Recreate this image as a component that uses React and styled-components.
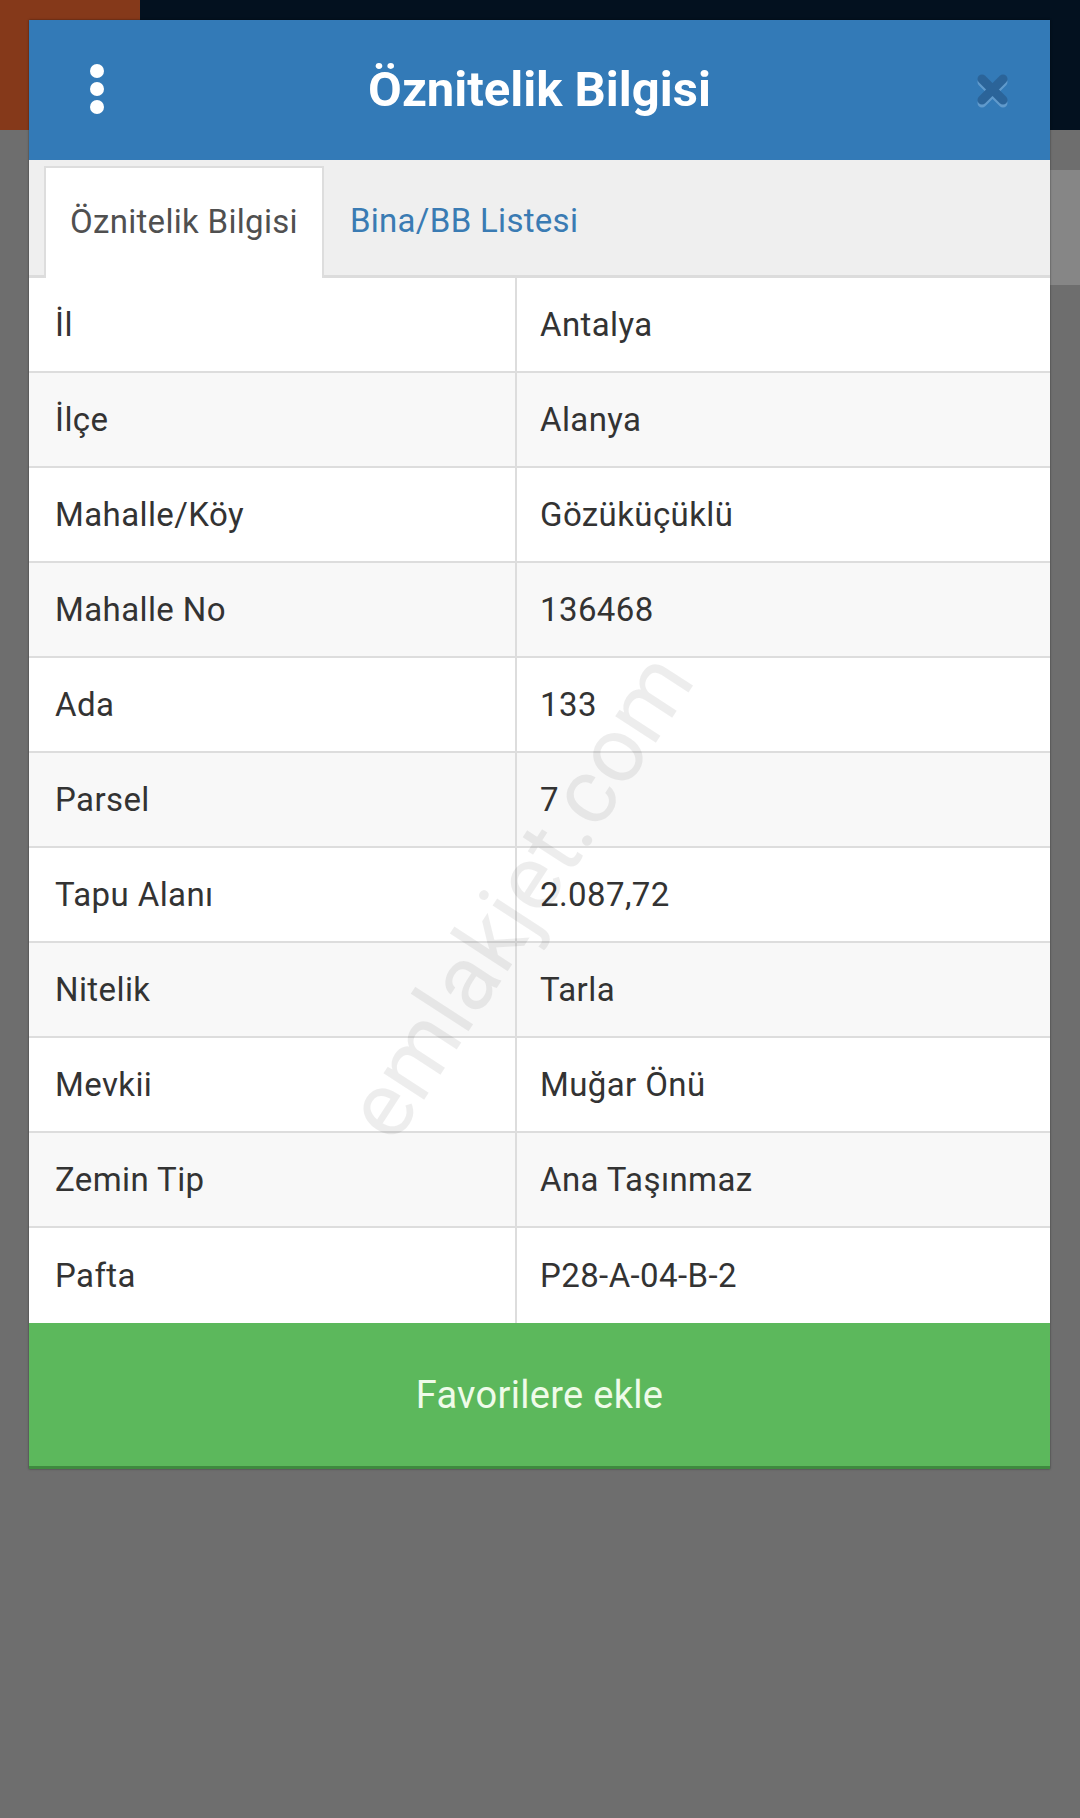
import React from 'react';
import styled, {createGlobalStyle} from 'styled-components';

const GlobalStyle = createGlobalStyle`
    html, body {
        margin: 0;
        padding: 0;
        background: #6e6e6e;
        font-family: Roboto, "Noto Sans", "Liberation Sans", sans-serif;
    }
`;
const Page = styled.div`
    position: relative;
    width: 1080px;
    height: 1818px;
    overflow: hidden;
    background: #6e6e6e;
`;
const TopStrip = styled.div`
    display: flex;
    height: 130px;
    background: #03111f;
`;
const OrangeBlock = styled.div`
    width: 140px;
    background: #85391a;
`;
const SideRail = styled.div`
    margin-left: auto;
    margin-top: 40px;
    width: 30px;
    height: 115px;
    background: #868686;
`;
const Modal = styled.div`
    position: absolute;
    left: 29px;
    top: 20px;
    width: 1021px;
    display: flex;
    flex-direction: column;
    background: #fff;
    box-shadow: 0 0 2px rgba(0,0,0,0.5);
`;
const Header = styled.div`
    height: 140px;
    display: grid;
    grid-template-columns: 1fr auto 1fr;
    align-items: center;
    padding: 0 36px;
    background: #337ab7;
`;
const Title = styled.div`
    color: #fff;
    font-size: 49px;
    font-weight: 700;
    margin-top: -2px;
`;
const Kebab = styled.div`
    display: flex;
    flex-direction: column;
    gap: 4px;
    margin: -2px 0 0 25px;
    span{
        width: 14px;
        height: 14px;
        border-radius: 50%;
        background: #fff;
    }
`;
const CloseBox = styled.div`
    justify-self: end;
    width: 40px;
    height: 40px;
    margin-top: 2px;
`;
const TabBar = styled.div`
    display: flex;
    align-items: flex-end;
    height: 115px;
    padding-left: 15px;
    background: #efefef;
    border-bottom: 3px solid #dcdcdc;
`;
const Tab = styled.div`
    height: ${props => props.active ? '107px' : '109px'};
    display: flex;
    align-items: center;
    padding: 0 24px;
    margin-bottom: ${props => props.active ? '-3px' : '0'};
    padding-bottom: ${props => props.active ? '3px' : '0'};
    font-size: 33px;
    letter-spacing: 0.3px;
    color: ${props => props.active ? '#505050' : '#3a7bb3'};
    background: ${props => props.active ? '#fff' : 'transparent'};
    border: 2px solid ${props => props.active ? '#dddddd' : 'transparent'};
    border-bottom: none;
`;
const Table = styled.div`
    position: relative;
    display: grid;
    grid-template-columns: 486px 1fr;
`;
const Cell = styled.div`
    height: 93px;
    display: flex;
    align-items: center;
    padding-left: ${props => props.value ? '23px' : '26px'};
    font-size: 33px;
    letter-spacing: 0.4px;
    color: #333;
    background: ${props => props.striped ? '#f8f8f8' : '#fff'};
    border-bottom: 2px solid #dddddd;
    border-left: ${props => props.value ? '2px solid #dddddd' : 'none'};
    &:nth-last-child(-n+3){
        border-bottom: none;
        height: 95px;
    }
`;
const Watermark = styled.div`
    position: absolute;
    left: 490px;
    top: 618px;
    transform: translate(-50%, -50%) rotate(-57deg);
    font-size: 92px;
    font-weight: 400;
    color: rgba(0,0,0,0.07);
    white-space: nowrap;
    pointer-events: none;
`;
const AddButton = styled.div`
    height: 143px;
    display: flex;
    align-items: center;
    justify-content: center;
    background: #5cb85c;
    border-bottom: 3px solid #3f8a3f;
    color: #effbe9;
    font-size: 38px;
    letter-spacing: 0.3px;
`;

const rows = [
    ['İl', 'Antalya'],
    ['İlçe', 'Alanya'],
    ['Mahalle/Köy', 'Gözüküçüklü'],
    ['Mahalle No', '136468'],
    ['Ada', '133'],
    ['Parsel', '7'],
    ['Tapu Alanı', '2.087,72'],
    ['Nitelik', 'Tarla'],
    ['Mevkii', 'Muğar Önü'],
    ['Zemin Tip', 'Ana Taşınmaz'],
    ['Pafta', 'P28-A-04-B-2'],
];

function App() {
    return (
        <Page>
            <GlobalStyle />
            <TopStrip>
                <OrangeBlock />
            </TopStrip>
            <SideRail />
            <Modal>
                <Header>
                    <Kebab><span /><span /><span /></Kebab>
                    <Title>Öznitelik Bilgisi</Title>
                    <CloseBox>
                        <svg width="40" height="40" viewBox="0 0 40 40">
                            <path d="M8 11 L29 32 M29 11 L8 32" stroke="#7fb0db" strokeWidth="9" strokeLinecap="round" opacity="0.6" />
                            <path d="M8 8 L29 29 M29 8 L8 29" stroke="#2b6499" strokeWidth="9" strokeLinecap="round" />
                        </svg>
                    </CloseBox>
                </Header>
                <TabBar>
                    <Tab active>Öznitelik Bilgisi</Tab>
                    <Tab>Bina/BB Listesi</Tab>
                </TabBar>
                <Table>
                    {rows.map((row, idx) => (
                        <React.Fragment key={`row-${idx}`}>
                            <Cell striped={idx % 2 === 1}>{row[0]}</Cell>
                            <Cell value striped={idx % 2 === 1}>{row[1]}</Cell>
                        </React.Fragment>
                    ))}
                    <Watermark>emlakjet.com</Watermark>
                </Table>
                <AddButton>Favorilere ekle</AddButton>
            </Modal>
        </Page>
    );
}

export default App;
